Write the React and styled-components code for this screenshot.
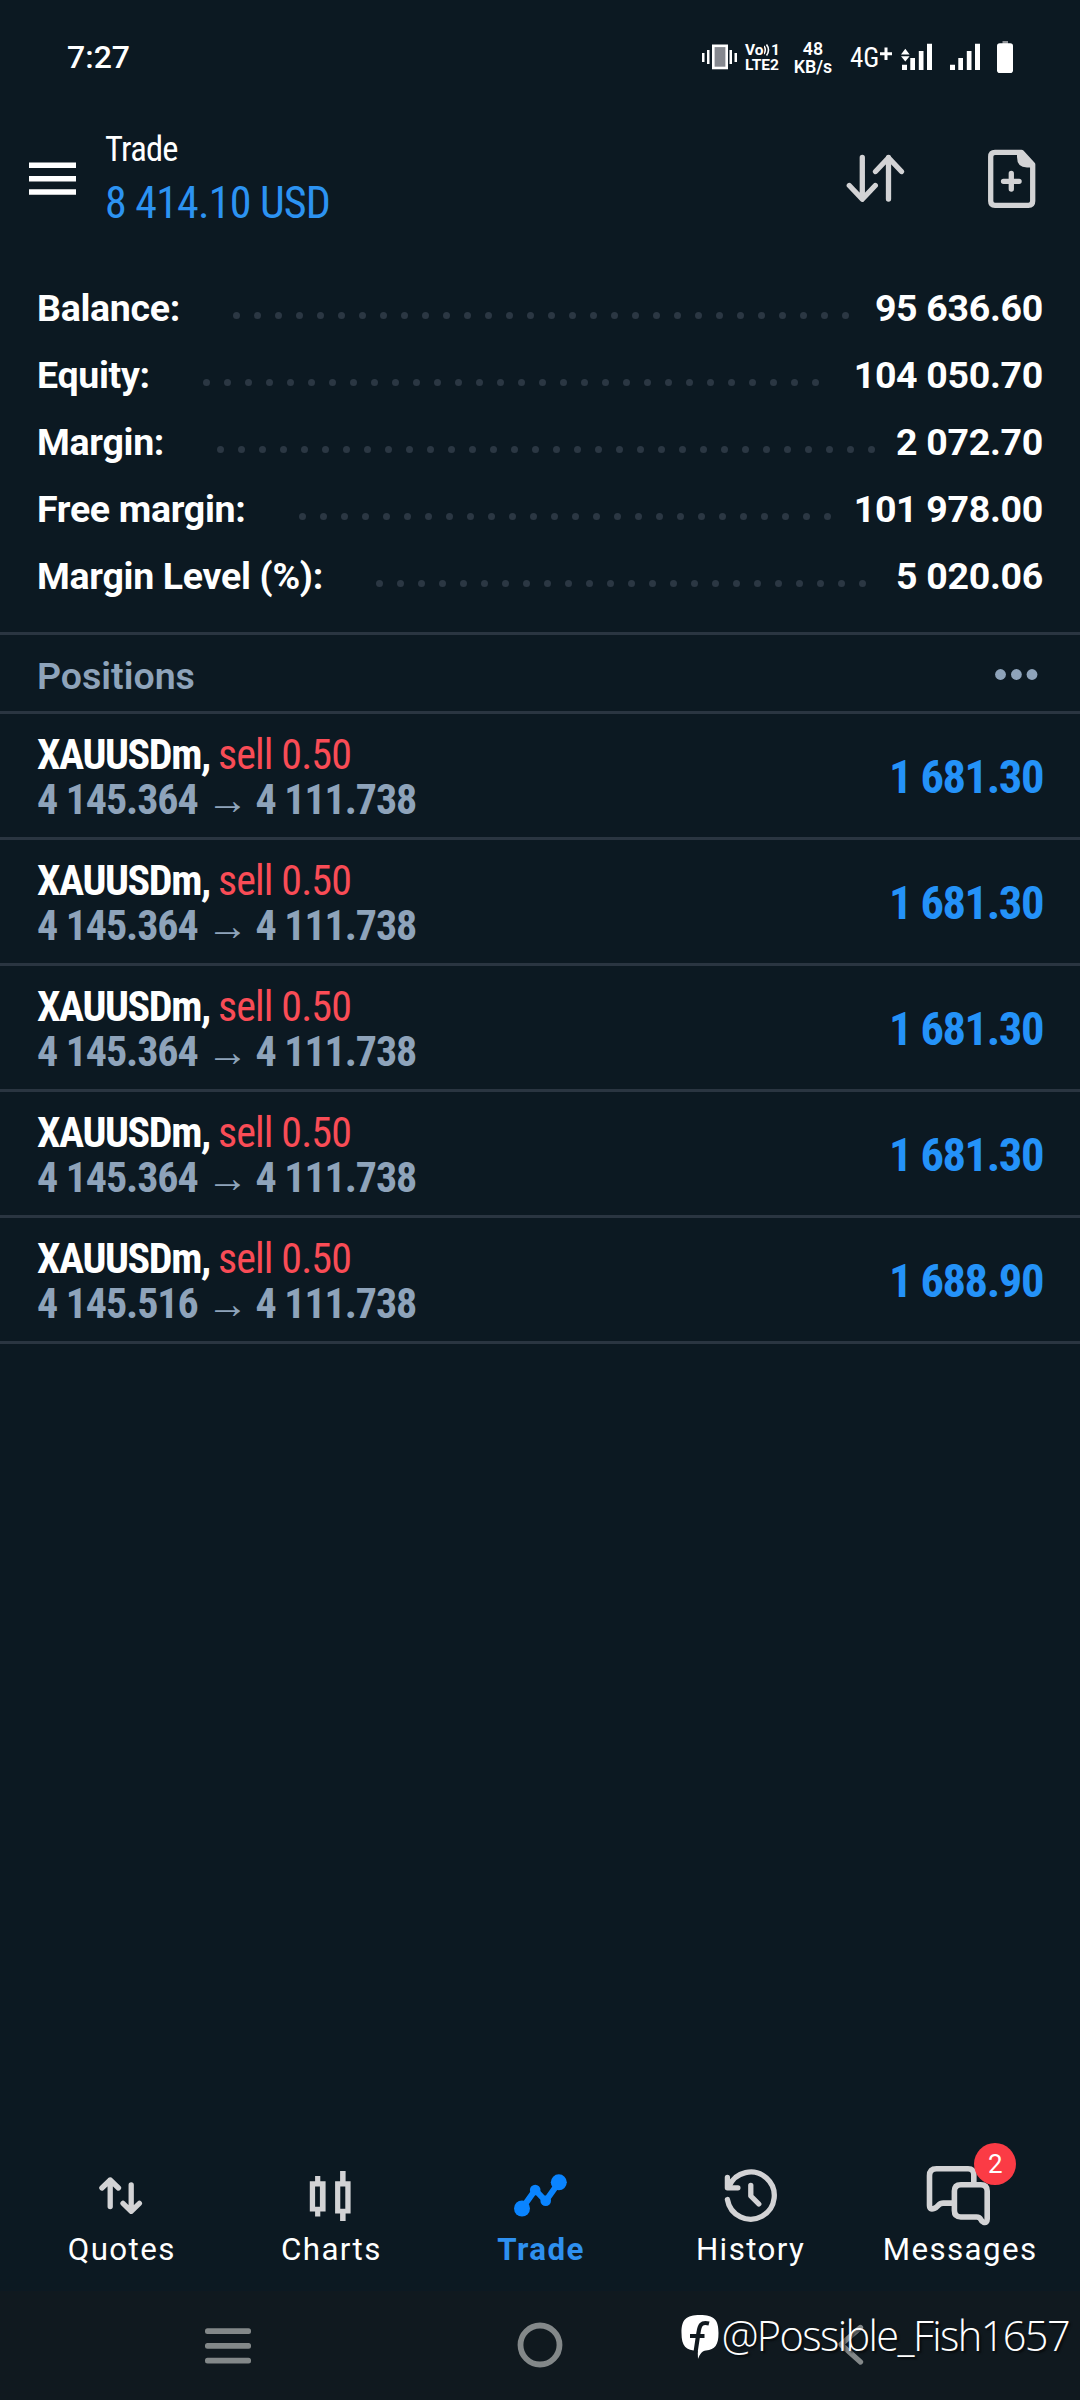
import React from 'react';
import styled, { createGlobalStyle } from 'styled-components';

const GlobalStyle = createGlobalStyle`
  * {
    box-sizing: border-box;
  }
  body {
    margin: 0;
    background: #0c1922;
    color: #fff;
    font-family: Roboto, "Liberation Sans", sans-serif;
  }
  svg {
    display: block;
  }
`;

const Screen = styled.div`
  display: flex;
  flex-direction: column;
  width: 1080px;
  height: 2400px;
  overflow: hidden;
`;

const StatusBar = styled.div`
  display: flex;
  align-items: center;
  height: 115px;
  padding: 0 67px 0 67px;
`;

const Clock = styled.span`
  flex-grow: 1;
  margin-bottom: 2px;
  font-size: 32px;
  font-weight: 500;
`;

const VoLte = styled.div`
  width: 35px;
  margin-left: 8px;
  margin-right: 1px;
  font-size: 15.5px;
  font-weight: 700;
  line-height: 14.5px;
`;

const VoTop = styled.div`
  display: flex;
  justify-content: space-between;
`;

const Speed = styled.div`
  width: 40px;
  margin-left: 12px;
  margin-right: 1px;
  font-size: 17.8px;
  font-weight: 600;
  line-height: 18px;
  text-align: center;
`;

const Network = styled.span`
  margin-left: 16px;
  width: 30px;
  font-size: 27px;
  font-stretch: condensed;
`;

const StatusIcon = styled.svg`
  height: 35px;
  margin-left: ${p => p.$gap || 0}px;
`;

const Header = styled.header`
  display: flex;
  align-items: center;
  height: 128px;
  padding: 0 44px 0 29px;
`;

const HeaderText = styled.div`
  flex-grow: 1;
  margin-left: 29px;
  font-stretch: condensed;
`;

const HeaderTitle = styled.div`
  font-size: 34.5px;
  line-height: 48px;
  letter-spacing: -0.7px;
`;

const HeaderSum = styled.div`
  font-size: 44px;
  line-height: 60px;
  letter-spacing: -0.8px;
  color: #2c93f2;
`;

const HeaderIcon = styled.svg`
  margin-left: ${p => p.$gap || 0}px;
`;

const Account = styled.section`
  padding: 31px 37px 23px 37px;
  border-bottom: 3px solid #2a3541;
`;

const AccountRow = styled.div`
  display: flex;
  align-items: center;
  height: 67px;
  font-size: 37.5px;
  font-weight: 700;
  letter-spacing: -0.3px;
`;

const Leader = styled.div`
  flex: 1;
  display: flex;
  flex-wrap: wrap;
  gap: 14px;
  height: 7px;
  margin: 15px 19px 0 53px;
  overflow: hidden;
  & i {
    width: 7px;
    height: 7px;
    border-radius: 50%;
    background: #2b3743;
  }
`;

const PositionsHead = styled.div`
  display: flex;
  align-items: center;
  justify-content: space-between;
  height: 79px;
  padding: 5px 42px 0 37px;
  border-bottom: 3px solid #2a3541;
  color: #8ea3ba;
  font-size: 37.5px;
  font-weight: 600;
  & svg {
    margin-bottom: 2px;
  }
`;

const Position = styled.div`
  display: flex;
  align-items: center;
  justify-content: space-between;
  height: 126px;
  padding: 3px 37px 0 37px;
  border-bottom: 3px solid #2a3541;
  font-stretch: condensed;
`;

const Line = styled.div`
  font-size: 42px;
  line-height: 45px;
`;

const Symbol = styled.span`
  font-weight: 700;
  letter-spacing: -1.4px;
`;

const Side = styled.span`
  color: #f94c56;
  letter-spacing: -0.9px;
`;

const Prices = styled(Line)`
  color: #8ea3ba;
  font-weight: 700;
  letter-spacing: -1.1px;
`;

const Profit = styled.div`
  color: #2492f8;
  font-size: 46.5px;
  font-weight: 700;
  letter-spacing: -1.4px;
`;

const Spacer = styled.div`
  flex: 1;
`;

const TabBar = styled.nav`
  display: flex;
  height: 125px;
  padding: 0 16px;
`;

const Tab = styled.div`
  flex: 1;
  display: flex;
  flex-direction: column;
  align-items: center;
  position: relative;
  color: ${p => (p.$active ? '#2e90f0' : '#fff')};
  font-size: 31.3px;
  font-weight: ${p => (p.$active ? 700 : 400)};
  line-height: 36px;
  letter-spacing: 1.4px;
  & span {
    margin-top: 6px;
    padding-left: 2px;
  }
`;

const Badge = styled.b`
  position: absolute;
  top: -23px;
  left: 120px;
  width: 42px;
  height: 42px;
  border-radius: 50%;
  background: #fb3b45;
  color: #fff;
  font-size: 26px;
  font-weight: 400;
  line-height: 42px;
  letter-spacing: 0;
  text-align: center;
`;

const SystemBar = styled.div`
  display: flex;
  align-items: center;
  gap: 262px;
  position: relative;
  height: 109px;
  padding-left: 203px;
  background: #10191f;
`;

const BackIcon = styled.svg`
  margin-left: 8px;
`;

const Watermark = styled.div`
  position: absolute;
  top: 19px;
  right: 11px;
  display: flex;
  align-items: center;
  gap: 2px;
  font-family: "Open Sans", "Noto Sans", sans-serif;
  font-size: 41.5px;
  font-weight: 350;
  line-height: 50px;
  letter-spacing: -1.6px;
  text-shadow: 2px 2px 2px rgba(0, 0, 0, 0.6);
`;

const account = [
  ['Balance:', '95 636.60'],
  ['Equity:', '104 050.70'],
  ['Margin:', '2 072.70'],
  ['Free margin:', '101 978.00'],
  ['Margin Level (%):', '5 020.06'],
];

const positions = [
  { open: '4 145.364', price: '4 111.738', profit: '1 681.30' },
  { open: '4 145.364', price: '4 111.738', profit: '1 681.30' },
  { open: '4 145.364', price: '4 111.738', profit: '1 681.30' },
  { open: '4 145.364', price: '4 111.738', profit: '1 681.30' },
  { open: '4 145.516', price: '4 111.738', profit: '1 688.90' },
];

// extra dots wrap to a hidden second line
const dots = Array.from({ length: 40 }, (_, i) => <i key={i} />);

const stroke = {
  fill: 'none',
  stroke: '#d3d3d5',
  strokeWidth: 5.3,
  strokeLinecap: 'round',
  strokeLinejoin: 'round',
};

const VibrateIcon = () => (
  <StatusIcon width="35" viewBox="701 40 35 35" fill="#fff">
    <path d="M701 53h2.5v9H701zM706 50h2.5v14H706zM728.5 50h2.5v14h-2.5zM733.5 53h2.5v9h-2.5z" />
    <rect x="712.3" y="45.8" width="13.4" height="22.2" fill="#85888f" stroke="#fff" strokeWidth="2.6" />
  </StatusIcon>
);

const SignalIcon = ({ gap, data }) => (
  <StatusIcon $gap={gap} width="30" viewBox="902 40 30 35" fill="#fff" overflow="visible">
    <path d="M902 64.7h5V70h-5zM910.3 58h4.7v12h-4.7zM918.8 51h4.7v19h-4.7zM927 43.7h5V70h-5z" />
    {data && <path d="M901 54.5l4.3-5.7 4.3 5.7zM901 56.3l4.3 5.2 4.3-5.2z" />}
  </StatusIcon>
);

const QuotesIcon = () => (
  <svg width="80" height="60" viewBox="80.8 2166 80 60" {...stroke}>
    <path d="M110 2206.5V2180M101.7 2188l8.3-8 8.3 8M131 2185v26M122.8 2203.3l8.2 8 8.2-8" />
  </svg>
);

const ChartsIcon = () => (
  <svg width="80" height="60" viewBox="290.4 2166 80 60" fill="#d3d3d5" fillRule="evenodd">
    <path d="M315.5 2176h5.2v5.3h5.3v30.2h-5.3v5h-5.2v-5h-5.3v-30.2h5.3zM315.5 2186.5v20.3h4.8v-20.3z" />
    <path d="M340.5 2171h5.5v10.3h5v32.2h-5v7.5h-5.5v-7.5h-5v-32.2h5zM340.7 2186.5v22.3h5v-22.3z" />
  </svg>
);

const TradeIcon = () => (
  <svg width="80" height="60" viewBox="500 2166 80 60" fill="#0a84ff">
    <path d="M522 2208.5l13.2-18.5 10.5 11 13.1-18.5" fill="none" stroke="#0a84ff" strokeWidth="6" />
    <circle cx="522" cy="2208.5" r="8" />
    <circle cx="535.2" cy="2190" r="5.3" />
    <circle cx="545.7" cy="2200.7" r="5.3" />
    <circle cx="558.8" cy="2182.3" r="8" />
  </svg>
);

const HistoryIcon = () => (
  <svg width="80" height="60" viewBox="709.6 2166 80 60" {...stroke}>
    <path d="M727 2199.5a23.6 23.6 0 1 0 1.5-13" />
    <path d="M727 2177.5v10.3h10.5M750.4 2185.3v10.7l8 8" />
  </svg>
);

const MessagesIcon = () => (
  <svg width="80" height="60" viewBox="919.2 2166 80 60" {...stroke} strokeWidth="5.6">
    <path d="M974 2183v-8.5q0-5.7-5.7-5.7h-31.6q-7 0-7 7v29.5q0 5 4.8 3 2-.8 4-3 2-2.2 5-2.2H953" />
    <path d="M961 2184.7h20q6.4 0 6.4 6.4v27.9q0 4.3-3.6 3.2-2-.6-3-3-1-2.2-4-2.2H961q-6.4 0-6.4-6.4v-19.5q0-6.4 6.4-6.4z" />
  </svg>
);

const tabs = [
  ['Quotes', QuotesIcon],
  ['Charts', ChartsIcon],
  ['Trade', TradeIcon],
  ['History', HistoryIcon],
  ['Messages', MessagesIcon],
];

const App = () => {
  return (
    <Screen>
      <GlobalStyle />
      <StatusBar>
        <Clock>7:27</Clock>
        <VibrateIcon />
        <VoLte>
          <VoTop>
            <span>Vo</span>
            <svg width="6" height="14" viewBox="0 0 6 14" fill="none" stroke="#fff" strokeWidth="1.6">
              <path d="M0 3q2.5 4 0 8M2.5 1.5q4 5.5 0 11" />
            </svg>
            <span>1</span>
          </VoTop>
          <div>LTE2</div>
        </VoLte>
        <Speed>
          <div>48</div>
          <div>KB/s</div>
        </Speed>
        <Network>4G</Network>
        <StatusIcon width="12" viewBox="880 40 12 35">
          <path d="M886 47.5v12.5M880 53.7h12" stroke="#fff" strokeWidth="3" />
        </StatusIcon>
        <SignalIcon gap={10} data />
        <SignalIcon gap={18} />
        <StatusIcon $gap={17} width="16" viewBox="997 40 16 35" fill="#fff">
          <path d="M1002.5 41h5.5v3h-5.5z" fill="#8d9196" />
          <rect x="997" y="43.3" width="16" height="29.7" rx="2.8" />
        </StatusIcon>
      </StatusBar>
      <Header>
        <HeaderIcon width="47" height="34" viewBox="29 162 47 34" fill="#fff">
          <path d="M29 162.5h47v5.5H29zM29 176h47v5.5H29zM29 189.3h47v5.5H29z" />
        </HeaderIcon>
        <HeaderText>
          <HeaderTitle>Trade</HeaderTitle>
          <HeaderSum>8 414.10 USD</HeaderSum>
        </HeaderText>
        <HeaderIcon width="60" height="60" viewBox="846 149 60 60" {...stroke}>
          <path d="M862.3 157.5V199M849.3 185.5l13 13.8 13-13.8M888.5 199V157.5M875.5 171.5l13-13.8 13 13.8" />
        </HeaderIcon>
        <HeaderIcon $gap={80} width="50" height="60" viewBox="986 149 50 60" {...stroke}>
          <path d="M1021.5 152.4H995q-4.3 0-4.3 4.3v44.3q0 4.3 4.3 4.3h33.4q4.3 0 4.3-4.3v-36.5z" />
          <path d="M1019 153v4q0 8.5 8 8.5h5.5l-11-12.5z" fill="#d3d3d5" strokeWidth="4" />
          <path d="M1011.3 173.5v15.6M1003.5 181.3h15.6" />
        </HeaderIcon>
      </Header>
      <Account>
        {account.map(([name, value]) => (
          <AccountRow key={name}>
            <span>{name}</span>
            <Leader>{dots}</Leader>
            <span>{value}</span>
          </AccountRow>
        ))}
      </Account>
      <PositionsHead>
        <span>Positions</span>
        <svg width="43" height="12" viewBox="0 0 43 12" fill="#8ea3ba">
          <circle cx="5.5" cy="5.5" r="5.4" />
          <circle cx="21.4" cy="5.5" r="5.4" />
          <circle cx="37" cy="5.5" r="5.4" />
        </svg>
      </PositionsHead>
      {positions.map((p, i) => (
        <Position key={i}>
          <div>
            <Line>
              <Symbol>XAUUSDm, </Symbol>
              <Side>sell 0.50</Side>
            </Line>
            <Prices>{`${p.open} → ${p.price}`}</Prices>
          </div>
          <Profit>{p.profit}</Profit>
        </Position>
      ))}
      <Spacer />
      <TabBar>
        {tabs.map(([name, Icon]) => (
          <Tab key={name} $active={name === 'Trade'}>
            <Icon />
            <span>{name}</span>
            {name === 'Messages' && <Badge>2</Badge>}
          </Tab>
        ))}
      </TabBar>
      <SystemBar>
        <svg width="50" height="50" viewBox="203 2321 50 50" fill="#838889">
          <rect x="205" y="2328.3" width="46" height="5.8" rx="2.5" />
          <rect x="205" y="2343" width="46" height="5.8" rx="2.5" />
          <rect x="205" y="2357.8" width="46" height="5.8" rx="2.5" />
        </svg>
        <svg width="50" height="50" viewBox="515 2321 50 50">
          <circle cx="540" cy="2345" r="19.5" fill="none" stroke="#838889" strokeWidth="5.8" />
        </svg>
        <BackIcon width="30" height="50" viewBox="835 2321 30 50" {...stroke} stroke="#838889">
          <path d="M860.5 2327.5L841 2344.5l19.5 17.5" />
        </BackIcon>
        <Watermark>
          <svg width="40" height="50" viewBox="677 2311 40 50" fill="#fff">
            <path d="M697 2316c14 0 18.500 4.500 18.500 18 0 12-3.500 16.500-12.500 17.600-4 .5-6 3.400-8 8.400l-.3-8c-12-.5-16.200-5-16.200-18 0-13.500 4.500-18 18.500-18z" />
            <path d="M706 2324.500c-8-2-9.500 2-10.500 9l-3 20M687 2337h14.500" fill="none" stroke="#10191f" strokeWidth="4.200" />
          </svg>
          <span>@Possible_Fish1657</span>
        </Watermark>
      </SystemBar>
    </Screen>
  );
};

export default App;
